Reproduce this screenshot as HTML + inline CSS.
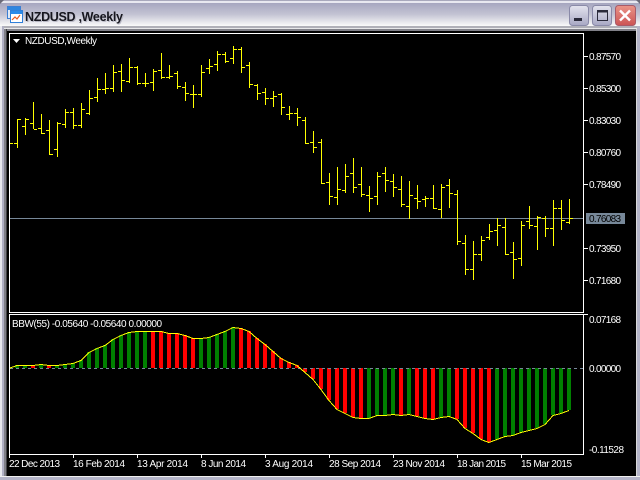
<!DOCTYPE html>
<html><head><meta charset="utf-8"><style>
html,body{margin:0;padding:0;background:#b4b4c8;width:640px;height:480px;overflow:hidden}
svg{display:block}
text{font-family:"Liberation Sans",sans-serif;font-size:10px;fill:#fff}
</style></head><body>
<svg width="640" height="480" viewBox="0 0 640 480" xmlns="http://www.w3.org/2000/svg">
<defs>
<linearGradient id="t" x1="0" y1="0" x2="0" y2="1"><stop offset="0" stop-color="#a6a6bf"/><stop offset=".5" stop-color="#c4c4d4"/><stop offset="1" stop-color="#fafafa"/></linearGradient>
<linearGradient id="b" x1="0" y1="0" x2="0" y2="1"><stop offset="0" stop-color="#e4e4ee"/><stop offset="1" stop-color="#a8a8c4"/></linearGradient>
<linearGradient id="r" x1="0" y1="0" x2="0" y2="1"><stop offset="0" stop-color="#ea9488"/><stop offset="1" stop-color="#cc5454"/></linearGradient>
</defs>
<g shape-rendering="crispEdges">
<rect width="640" height="480" fill="#b4b4c8"/>
<rect y="0" width="640" height="1" fill="#a8a8bc"/>
<rect y="1" width="640" height="2" fill="#e8e8f0"/>
<rect y="3" width="640" height="23" fill="url(#t)"/>
<rect y="26" width="640" height="2" fill="#b0b0b8"/>
<rect y="28" width="640" height="1" fill="#e8e8ea"/>
<rect y="29" width="640" height="2" fill="#808088"/>
<rect x="0" y="26" width="2" height="454" fill="#e8e8ee"/>
<rect x="2" y="26" width="2" height="454" fill="#b0b0c4"/>
<rect x="4" y="29" width="2" height="447" fill="#808088"/>
<rect x="6" y="29" width="1" height="447" fill="#404044"/>
<rect x="636" y="29" width="1" height="447" fill="#d8d8d8"/>
<rect x="637" y="26" width="3" height="454" fill="#b4b4c8"/>
<rect x="0" y="476" width="640" height="1" fill="#f0f0f0"/>
<rect x="0" y="477" width="640" height="3" fill="#b4b4c8"/>
<rect x="7" y="31" width="629" height="445" fill="#000"/>
<path d="M9.5 33.5H583.5V312.5H9.5ZM9.5 314.5H583.5V454.5H9.5Z" fill="none" stroke="#fff"/>
<path d="M584 56.5h4M584 88.5h4M584 120.5h4M584 152.5h4M584 184.5h4M584 248.5h4M584 280.5h4M584 314.5h4M9.5 455v3M73.5 455v3M137.5 455v3M201.5 455v3M265.5 455v3M329.5 455v3M393.5 455v3M457.5 455v3M521.5 455v3" stroke="#fff" fill="none"/>
<path d="M10 218.5H583" stroke="#778899"/>
<path d="M10 143.5h3M17.5 119V148M14 143.5h3M18 119.5h3M25.5 118V135M22 126.5h3M26 119.5h3M33.5 102V129M30 123.5h3M34 129.5h3M41.5 114V134M38 128.5h3M42 133.5h3M49.5 120V155M46 130.5h3M50 154.5h3M57.5 122V157M54 149.5h3M58 123.5h3M65.5 109V128M62 124.5h3M66 112.5h3M73.5 108V129M70 112.5h3M74 125.5h3M81.5 103V128M78 125.5h3M82 109.5h3M89.5 90V115M86 113.5h3M90 98.5h3M97.5 78V102M94 97.5h3M98 89.5h3M105.5 73V94M102 89.5h3M106 88.5h3M113.5 65V92M110 88.5h3M114 72.5h3M121.5 64V92M118 71.5h3M122 80.5h3M129.5 58V83M126 81.5h3M130 67.5h3M137.5 66V85M134 67.5h3M138 83.5h3M145.5 73V87M142 83.5h3M146 83.5h3M153.5 69V91M150 82.5h3M154 71.5h3M161.5 53V79M158 70.5h3M162 77.5h3M169.5 65V79M166 77.5h3M170 76.5h3M177.5 71V89M174 73.5h3M178 86.5h3M185.5 82V101M182 87.5h3M186 93.5h3M193.5 85V108M190 94.5h3M194 94.5h3M201.5 65V97M198 94.5h3M202 72.5h3M209.5 59V74M206 68.5h3M210 66.5h3M217.5 51V71M214 64.5h3M218 54.5h3M225.5 52V63M222 54.5h3M226 61.5h3M233.5 46V64M230 58.5h3M234 49.5h3M241.5 47V73M238 49.5h3M242 67.5h3M249.5 62V88M246 65.5h3M250 84.5h3M257.5 84V100M254 85.5h3M258 93.5h3M265.5 88V105M262 92.5h3M266 98.5h3M273.5 91V107M270 98.5h3M274 96.5h3M281.5 93V115M278 94.5h3M282 107.5h3M289.5 106V120M286 114.5h3M290 113.5h3M297.5 108V126M294 113.5h3M298 117.5h3M305.5 117V144M302 120.5h3M306 143.5h3M313.5 131V153M310 142.5h3M314 147.5h3M321.5 139V184M318 142.5h3M322 183.5h3M329.5 173V205M326 182.5h3M330 196.5h3M337.5 167V205M334 197.5h3M338 189.5h3M345.5 164V193M342 190.5h3M346 176.5h3M353.5 158V193M350 173.5h3M354 187.5h3M361.5 167V197M358 184.5h3M362 194.5h3M369.5 186V212M366 195.5h3M370 198.5h3M377.5 172V205M374 196.5h3M378 176.5h3M385.5 167V192M382 173.5h3M386 180.5h3M393.5 174V197M390 181.5h3M394 187.5h3M401.5 176V207M398 189.5h3M402 204.5h3M409.5 181V219M406 206.5h3M410 195.5h3M417.5 185V209M414 198.5h3M418 201.5h3M425.5 196V207M422 199.5h3M426 198.5h3M433.5 185V209M430 198.5h3M434 208.5h3M441.5 184V218M438 209.5h3M442 187.5h3M449.5 179V208M446 185.5h3M450 193.5h3M457.5 190V245M454 194.5h3M458 241.5h3M465.5 235V275M462 243.5h3M466 269.5h3M473.5 241V280M470 269.5h3M474 254.5h3M481.5 236V261M478 254.5h3M482 240.5h3M489.5 224V240M486 237.5h3M490 231.5h3M497.5 218V246M494 230.5h3M498 225.5h3M505.5 218V255M502 227.5h3M506 254.5h3M513.5 242V279M510 252.5h3M514 259.5h3M521.5 221V266M518 258.5h3M522 225.5h3M529.5 206V229M526 221.5h3M530 225.5h3M537.5 216V250M534 226.5h3M538 217.5h3M545.5 216V237M542 218.5h3M546 228.5h3M553.5 200V246M550 228.5h3M554 208.5h3M561.5 200V230M558 208.5h3M562 220.5h3M569.5 199V224M566 222.5h3M570 218.5h3" stroke="#ff0" fill="none"/>
<path d="M15 368V365h4v3zM23 368V365h4v3zM39 368V364h4v4zM55 368V365h4v3zM63 368V364h4v4zM71 368V363h4v5zM79 368V360h4v8zM87 368V352h4v16zM95 368V348h4v20zM103 368V345h4v23zM111 368V339h4v29zM119 368V335h4v33zM127 368V332h4v36zM135 368V331h4v37zM143 368V331h4v37zM199 368V338h4v30zM207 368V337h4v31zM215 368V334h4v34zM223 368V331h4v37zM231 368V327h4v41zM367 368V418h4v-50zM375 368V415h4v-47zM383 368V415h4v-47zM391 368V414h4v-46zM407 368V414h4v-46zM439 368V417h4v-49zM447 368V416h4v-48zM495 368V439h4v-71zM503 368V436h4v-68zM511 368V435h4v-67zM519 368V432h4v-64zM527 368V430h4v-62zM535 368V428h4v-60zM543 368V424h4v-56zM551 368V415h4v-47zM559 368V413h4v-45zM567 368V410h4v-42z" fill="#008000"/>
<path d="M31 368V365h4v3zM47 368V365h4v3zM151 368V331h4v37zM159 368V331h4v37zM167 368V333h4v35zM175 368V333h4v35zM183 368V335h4v33zM191 368V338h4v30zM239 368V328h4v40zM247 368V331h4v37zM255 368V338h4v30zM263 368V344h4v24zM271 368V351h4v17zM279 368V358h4v10zM287 368V362h4v6zM295 368V365h4v3zM303 368V372h4v-4zM311 368V379h4v-11zM319 368V389h4v-21zM327 368V400h4v-32zM335 368V409h4v-41zM343 368V413h4v-45zM351 368V417h4v-49zM359 368V418h4v-50zM399 368V415h4v-47zM415 368V416h4v-48zM423 368V418h4v-50zM431 368V419h4v-51zM455 368V419h4v-51zM463 368V428h4v-60zM471 368V433h4v-65zM479 368V439h4v-71zM487 368V442h4v-74z" fill="#f00"/>
<path d="M10 368.5H583" stroke="#778899" stroke-dasharray="3 3"/>
<rect x="586" y="213" width="39" height="11" fill="#778899"/>
<polyline fill="none" stroke="#ff0" stroke-width="1" points="10,368 17,365.5 25,365.5 33,365.5 41,364.5 49,365.5 57,365.5 65,364.5 73,363.5 81,360.5 89,352.5 97,348.5 105,345.5 113,339.5 121,335.5 129,332.5 137,331.5 145,331.5 153,331.5 161,331.5 169,333.5 177,333.5 185,335.5 193,338.5 201,338.5 209,337.5 217,334.5 225,331.5 233,327.5 241,328.5 249,331.5 257,338.5 265,344.5 273,351.5 281,358.5 289,362.5 297,365.5 305,372.5 313,379.5 321,389.5 329,400.5 337,409.5 345,413.5 353,417.5 361,418.5 369,418.5 377,415.5 385,415.5 393,414.5 401,415.5 409,414.5 417,416.5 425,418.5 433,419.5 441,417.5 449,416.5 457,419.5 465,428.5 473,433.5 481,439.5 489,442.5 497,439.5 505,436.5 513,435.5 521,432.5 529,430.5 537,428.5 545,424.5 553,415.5 561,413.5 569,410.5"/>
</g>
<path d="M0 0h4L0 4z" fill="#6a6a78"/>
<path d="M640 0h-4l4 4z" fill="#6a6a78"/>
<text x="26" y="22" style="font-size:12.5px;font-weight:bold;fill:#b8b8c4" textLength="98" lengthAdjust="spacing">NZDUSD ,Weekly</text>
<text x="25" y="21" style="font-size:12.5px;font-weight:bold;fill:#16161e" textLength="98" lengthAdjust="spacing">NZDUSD ,Weekly</text>
<g shape-rendering="crispEdges">
<rect x="7.5" y="6.5" width="13" height="12" fill="#dfe9f6" stroke="#3b7fd4"/>
<rect x="8" y="7" width="12" height="3" fill="#2f86e0"/>
<rect x="10.5" y="10.5" width="12" height="12" fill="#fff" stroke="#2f7fd8"/>
<rect x="11" y="11" width="11" height="3" fill="#2a8ae8"/>
</g>
<path d="M12 20l3-3 2 2 3-4" fill="none" stroke="#e85a20" stroke-width="1.2"/>
<g>
<rect x="569.5" y="5.5" width="19" height="20" rx="3" fill="url(#b)" stroke="#8a8aa8"/>
<rect x="574" y="18" width="8" height="3" fill="#2a2a3a"/>
<rect x="592.5" y="5.5" width="19" height="20" rx="3" fill="url(#b)" stroke="#8a8aa8"/>
<rect x="597.5" y="10.5" width="10" height="10" fill="none" stroke="#2a2a3a"/>
<rect x="597" y="10" width="11" height="2.5" fill="#2a2a3a"/>
<rect x="615.5" y="5.5" width="20" height="20" rx="3" fill="url(#r)" stroke="#a85a68"/>
<path d="M620 10.5l10 10M630 10.5l-10 10" stroke="#fff" stroke-width="2.4" fill="none"/>
</g>
<path d="M13 39h7l-3.5 4z" fill="#fff"/>
<text x="25" y="44" textLength="72" lengthAdjust="spacing">NZDUSD,Weekly</text>
<text x="12" y="327" textLength="150" lengthAdjust="spacing">BBW(55) -0.05640 -0.05640 0.00000</text>
<text x="589" y="60" textLength="32" lengthAdjust="spacing">0.87570</text>
<text x="589" y="92" textLength="32" lengthAdjust="spacing">0.85300</text>
<text x="589" y="124" textLength="32" lengthAdjust="spacing">0.83030</text>
<text x="589" y="156" textLength="32" lengthAdjust="spacing">0.80760</text>
<text x="589" y="188" textLength="32" lengthAdjust="spacing">0.78490</text>
<text x="589" y="222" textLength="32" lengthAdjust="spacing" style="fill:#000">0.76083</text>
<text x="589" y="252" textLength="32" lengthAdjust="spacing">0.73950</text>
<text x="589" y="284" textLength="32" lengthAdjust="spacing">0.71680</text>
<text x="589" y="323" textLength="32" lengthAdjust="spacing">0.07168</text>
<text x="589" y="372" textLength="32" lengthAdjust="spacing">0.00000</text>
<text x="589" y="453" textLength="35" lengthAdjust="spacing">-0.11528</text>
<text x="9" y="467" textLength="51" lengthAdjust="spacing">22 Dec 2013</text>
<text x="73" y="467" textLength="52" lengthAdjust="spacing">16 Feb 2014</text>
<text x="137" y="467" textLength="51" lengthAdjust="spacing">13 Apr 2014</text>
<text x="201" y="467" textLength="45" lengthAdjust="spacing">8 Jun 2014</text>
<text x="265" y="467" textLength="48" lengthAdjust="spacing">3 Aug 2014</text>
<text x="329" y="467" textLength="52" lengthAdjust="spacing">28 Sep 2014</text>
<text x="393" y="467" textLength="52" lengthAdjust="spacing">23 Nov 2014</text>
<text x="457" y="467" textLength="49" lengthAdjust="spacing">18 Jan 2015</text>
<text x="521" y="467" textLength="51" lengthAdjust="spacing">15 Mar 2015</text>
</svg>
</body></html>
